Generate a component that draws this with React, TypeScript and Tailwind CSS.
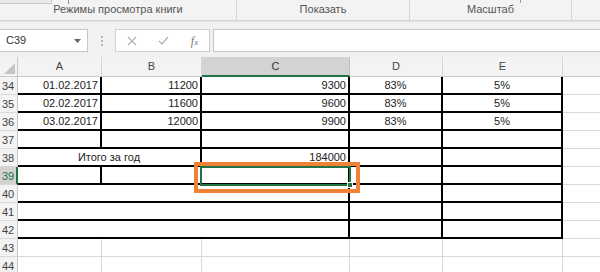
import React from 'react';
import clsx from 'clsx';

type Col = 'A' | 'B' | 'C' | 'D' | 'E' | 'F' | 'AB' | 'AC';

const widths: Record<Col, string> = {
  A: 'w-[84px]',
  B: 'w-[100px]',
  C: 'w-[148px]',
  D: 'w-[93px]',
  E: 'w-[120px]',
  F: 'w-[60px]',
  AB: 'w-[184px]',
  AC: 'w-[332px]',
};

interface CellSpec {
  col: Col;
  text?: string;
  align?: 'r' | 'c';
  bold?: boolean; // black borders right + bottom
}

interface RowSpec {
  n: number;
  cells: CellSpec[];
}

const plain = (cols: Col[]): CellSpec[] => cols.map((col) => ({ col, bold: col !== 'F' }));

const rows: RowSpec[] = [
  {
    n: 34,
    cells: [
      { col: 'A', text: '01.02.2017', align: 'r', bold: true },
      { col: 'B', text: '11200', align: 'r', bold: true },
      { col: 'C', text: '9300', align: 'r', bold: true },
      { col: 'D', text: '83%', align: 'c', bold: true },
      { col: 'E', text: '5%', align: 'c', bold: true },
      { col: 'F' },
    ],
  },
  {
    n: 35,
    cells: [
      { col: 'A', text: '02.02.2017', align: 'r', bold: true },
      { col: 'B', text: '11600', align: 'r', bold: true },
      { col: 'C', text: '9600', align: 'r', bold: true },
      { col: 'D', text: '83%', align: 'c', bold: true },
      { col: 'E', text: '5%', align: 'c', bold: true },
      { col: 'F' },
    ],
  },
  {
    n: 36,
    cells: [
      { col: 'A', text: '03.02.2017', align: 'r', bold: true },
      { col: 'B', text: '12000', align: 'r', bold: true },
      { col: 'C', text: '9900', align: 'r', bold: true },
      { col: 'D', text: '83%', align: 'c', bold: true },
      { col: 'E', text: '5%', align: 'c', bold: true },
      { col: 'F' },
    ],
  },
  { n: 37, cells: plain(['A', 'B', 'C', 'D', 'E', 'F']) },
  {
    n: 38,
    cells: [
      { col: 'AB', text: 'Итого за год', align: 'c', bold: true },
      { col: 'C', text: '184000', align: 'r', bold: true },
      { col: 'D', bold: true },
      { col: 'E', bold: true },
      { col: 'F' },
    ],
  },
  { n: 39, cells: plain(['A', 'B', 'C', 'D', 'E', 'F']) },
  { n: 40, cells: plain(['AC', 'D', 'E', 'F']) },
  { n: 41, cells: plain(['AC', 'D', 'E', 'F']) },
  { n: 42, cells: plain(['AC', 'D', 'E', 'F']) },
  { n: 43, cells: [{ col: 'A' }, { col: 'B' }, { col: 'C' }, { col: 'D' }, { col: 'E' }, { col: 'F' }] },
  { n: 44, cells: [{ col: 'A' }, { col: 'B' }, { col: 'C' }, { col: 'D' }, { col: 'E' }, { col: 'F' }] },
];

function Cell({ col, text, align, bold }: CellSpec) {
  return (
    <div
      className={clsx(
        'h-full shrink-0 flex items-end px-[2px] pb-[2px] text-[11px] leading-none text-[#1b1b1b] whitespace-nowrap',
        widths[col],
        bold ? 'border-r-2 border-r-black border-b-2 border-b-black' : 'border-r border-r-[#d9d9d9] border-b border-b-[#d9d9d9]',
        align === 'r' ? 'justify-end' : align === 'c' ? 'justify-center' : 'justify-start'
      )}
    >
      {text}
    </div>
  );
}

const headers: { col: Col; label: string; active?: boolean }[] = [
  { col: 'A', label: 'A' },
  { col: 'B', label: 'B' },
  { col: 'C', label: 'C', active: true },
  { col: 'D', label: 'D' },
  { col: 'E', label: 'E' },
  { col: 'F', label: '' },
];

export default function App() {
  return (
    <div className="relative w-[600px] h-[272px] overflow-hidden bg-white font-['Liberation_Sans',Arial,sans-serif]">
      {/* Ribbon group labels */}
      <div className="flex h-[21px] bg-[#f3f3f3] border-b border-[#d6d6d6] text-[11px] text-[#555]">
        <div className="relative w-[237px] shrink-0 flex items-end justify-center pb-[3px] border-r border-[#d6d6d6]">
          <div className="absolute left-0 top-0 w-[52px] h-[4px] border-b border-r border-[#c9c9c9] bg-[#e9e9e9]" />
          <div className="absolute left-[68px] top-0 w-px h-[4px] bg-[#888]" />
          Режимы просмотра книги
        </div>
        <div className="w-[173px] shrink-0 flex items-end justify-center pb-[3px] border-r border-[#d6d6d6]">Показать</div>
        <div className="relative w-[162px] shrink-0 flex items-end justify-center pb-[3px] border-r border-[#d6d6d6]">
          <div className="absolute left-[110px] top-0 w-px h-[3px] bg-[#999]" />
          Масштаб
        </div>
        <div className="flex-1" />
      </div>

      {/* Formula bar */}
      <div className="flex items-start h-[36px] pt-[7px] bg-[#f1f1f1] border-t border-[#e2e2e2]">
        <div className="w-[88px] h-[23px] shrink-0 bg-white border border-l-0 border-[#c6c6c6] flex items-center justify-between pl-[6px] pr-[6px] text-[11px] text-[#333]">
          <span>C39</span>
          <svg width="7" height="4" viewBox="0 0 7 4">
            <path d="M0 0 L7 0 L3.5 4 Z" fill="#666" />
          </svg>
        </div>
        <div className="w-[27px] h-[23px] shrink-0 flex flex-col items-center justify-center gap-[2px]">
          <span className="w-[2px] h-[2px] bg-[#b5b5b5]" />
          <span className="w-[2px] h-[2px] bg-[#b5b5b5]" />
          <span className="w-[2px] h-[2px] bg-[#b5b5b5]" />
        </div>
        <div className="w-[95px] h-[23px] shrink-0 bg-white border border-[#d0d0d0] flex items-center justify-around">
          <svg width="10" height="10" viewBox="0 0 10 10">
            <path d="M1 1 L9 9 M9 1 L1 9" stroke="#b3b3b3" strokeWidth="1.2" />
          </svg>
          <svg width="11" height="9" viewBox="0 0 11 9">
            <path d="M1 5 L4 8 L10 1" stroke="#b3b3b3" strokeWidth="1.3" fill="none" />
          </svg>
          <span className="font-['Liberation_Serif',serif] italic text-[12px] text-[#777] leading-none">
            f<span className="text-[9px]">x</span>
          </span>
        </div>
        <div className="flex-1 h-[23px] ml-[3px] bg-white border border-r-0 border-[#c6c6c6]" />
      </div>

      {/* Sheet */}
      <div className="relative">
        {/* Column headers */}
        <div className="flex h-[20px] text-[11px] text-[#444]">
          <div className="w-[18px] shrink-0 bg-[#f3f3f3] border-r border-b border-[#c9c9c9] flex items-end justify-end p-[2px]">
            <svg width="11" height="11" viewBox="0 0 11 11">
              <path d="M11 0 L11 11 L0 11 Z" fill="#c4c4c4" />
            </svg>
          </div>
          {headers.map((h) => (
            <div
              key={h.col}
              className={clsx(
                'shrink-0 flex items-center justify-center border-r',
                widths[h.col],
                h.active
                  ? 'bg-[#d3d3d3] border-r-[#c0c0c0] border-b-2 border-b-[#217346] text-[#333]'
                  : 'bg-[#f3f3f3] border-r-[#d4d4d4] border-b border-b-[#c9c9c9]'
              )}
            >
              {h.label}
            </div>
          ))}
        </div>

        {rows.map((row) => (
          <div key={row.n} className="flex h-[18px]">
            <div
              className={clsx(
                'w-[18px] shrink-0 flex items-end pl-[2px] pb-[2px] text-[11px] leading-none border-b border-b-[#d9d9d9]',
                row.n === 39
                  ? 'bg-[#d3d3d3] text-[#217346] border-r-2 border-r-[#217346]'
                  : 'bg-[#f3f3f3] text-[#444] border-r border-r-[#c9c9c9]'
              )}
            >
              {row.n}
            </div>
            {row.cells.map((c, i) => (
              <Cell key={i} {...c} />
            ))}
          </div>
        ))}

        {/* Active cell C39 */}
        <div className="absolute left-[200px] top-[109px] w-[151px] h-[20px] border-2 border-[#217346]">
          <div className="absolute -right-[4px] -bottom-[4px] w-[6px] h-[6px] bg-[#217346] border border-white" />
        </div>
      </div>

      {/* Orange highlight frame */}
      <div className="absolute left-[194px] top-[162px] w-[166px] h-[31px] border-[4px] border-[#ee8336]" />
    </div>
  );
}
